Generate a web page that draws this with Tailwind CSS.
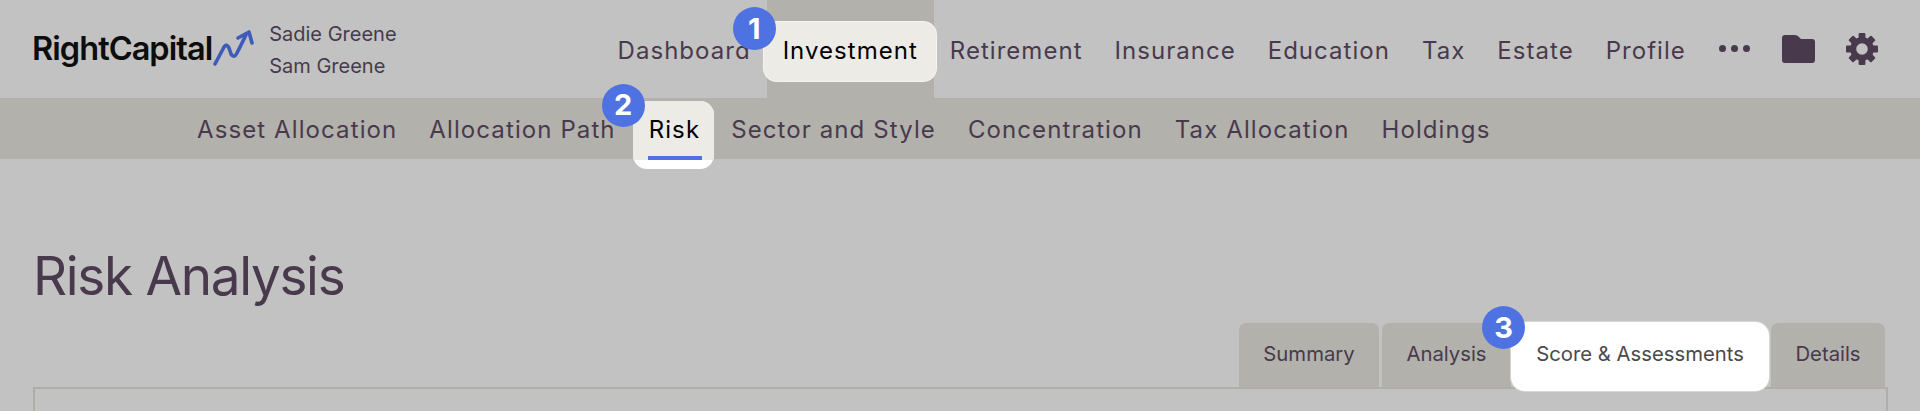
<!DOCTYPE html>
<html>
<head>
<meta charset="utf-8">
<script src="https://cdn.jsdelivr.net/npm/@tailwindcss/browser@4"></script>
</head>
<body class="m-0 h-[411px] w-[1920px] overflow-hidden bg-[#c2c2c2] font-['Inter',sans-serif] text-[#483a4c]">
  <header class="flex h-[98px] items-stretch">
    <div class="flex items-center pl-[32px]">
      <span class="text-[32.5px] font-semibold leading-none tracking-[-0.95px] text-[#0d0d0d]">RightCapital</span>
      <svg class="h-[44px] w-[42px]" viewBox="0 0 42 44" fill="none" stroke="#3d5bb8" stroke-width="3.6" stroke-linecap="round" stroke-linejoin="round">
        <path d="M3 37 L11 22 Q14 15 17 21 L19 27 Q22 32 25 26 L34 8"/>
        <path d="M26 11 L37 5 L40 16"/>
      </svg>
      <div class="ml-[15px] flex flex-col gap-[12px] pt-[2px] text-[20px] leading-[20px]">
        <span>Sadie Greene</span>
        <span>Sam Greene</span>
      </div>
    </div>
    <nav class="ml-[205px] flex items-stretch text-[24px] tracking-[1.03px]">
      <a class="flex items-center px-4 pt-[3px]">Dashboard</a>
      <a class="relative flex items-center bg-[#b3b1ac] px-4 pt-[3px] text-black">
        <span class="absolute left-[-4px] right-[-3px] top-[21px] h-[61px] rounded-[14px] border border-white/50 bg-[#edebe6]"></span>
        <span class="relative">Investment</span>
        <span class="absolute left-[-34px] top-[7px] flex h-[43px] w-[43px] items-center justify-center rounded-full bg-[#4f72e3] text-[29px] font-bold tracking-normal text-white">1</span>
      </a>
      <a class="flex items-center px-4 pt-[3px]">Retirement</a>
      <a class="flex items-center px-4 pt-[3px]">Insurance</a>
      <a class="flex items-center px-4 pt-[3px]">Education</a>
      <a class="flex items-center px-4 pt-[3px]">Tax</a>
      <a class="flex items-center px-4 pt-[3px]">Estate</a>
      <a class="flex items-center px-4 pt-[3px]">Profile</a>
      <div class="ml-[17px] flex items-center gap-[5px] pb-[1px]">
        <span class="h-[7px] w-[7px] rounded-full bg-[#483a4c]"></span>
        <span class="h-[7px] w-[7px] rounded-full bg-[#483a4c]"></span>
        <span class="h-[7px] w-[7px] rounded-full bg-[#483a4c]"></span>
      </div>
      <div class="ml-[32px] flex items-center pb-[1px]">
        <svg class="h-[28px] w-[33px]" viewBox="0 0 33 28" fill="#483a4c"><path d="M3 0 H13 Q15 0 16.5 1.5 L19 4 H30 Q33 4 33 7 V25 Q33 28 30 28 H3 Q0 28 0 25 V3 Q0 0 3 0 Z"/></svg>
      </div>
      <div class="ml-[31px] flex items-center pb-[1px]">
        <svg class="h-[32px] w-[32px]" viewBox="0 0 32 32" fill="#483a4c">
          <circle cx="16" cy="16" r="8.8" fill="none" stroke="#483a4c" stroke-width="6"/>
          <rect x="12.6" y="0" width="6.8" height="6" rx="1"/>
          <rect x="12.6" y="0" width="6.8" height="6" rx="1" transform="rotate(45 16 16)"/>
          <rect x="12.6" y="0" width="6.8" height="6" rx="1" transform="rotate(90 16 16)"/>
          <rect x="12.6" y="0" width="6.8" height="6" rx="1" transform="rotate(135 16 16)"/>
          <rect x="12.6" y="0" width="6.8" height="6" rx="1" transform="rotate(180 16 16)"/>
          <rect x="12.6" y="0" width="6.8" height="6" rx="1" transform="rotate(225 16 16)"/>
          <rect x="12.6" y="0" width="6.8" height="6" rx="1" transform="rotate(270 16 16)"/>
          <rect x="12.6" y="0" width="6.8" height="6" rx="1" transform="rotate(315 16 16)"/>
        </svg>
      </div>
    </nav>
  </header>

  <nav class="flex h-[61px] items-center gap-8 bg-[#b3b1ac] pl-[197px] pt-[2px] text-[24px] tracking-[1.1px]">
    <a>Asset Allocation</a>
    <a>Allocation Path</a>
    <a class="relative left-[1px] text-black">
      <span class="absolute left-[-16px] right-[-14px] top-[-11px] h-[68px] overflow-hidden rounded-[14px] bg-white"><span class="block h-[59px] bg-[#edebe6]"></span></span>
      <span class="absolute bottom-[-12px] left-[-1px] right-[-2px] h-[4px] bg-[#4f72e3]"></span>
      <span class="relative">Risk</span>
      <span class="absolute left-[-47px] top-[-28px] flex h-[43px] w-[43px] items-center justify-center rounded-full bg-[#4f72e3] text-[29px] font-bold tracking-normal text-white">2</span>
    </a>
    <a>Sector and Style</a>
    <a>Concentration</a>
    <a>Tax Allocation</a>
    <a>Holdings</a>
  </nav>

  <main class="px-[33px]">
    <h1 class="mt-[85px] text-[53px] font-normal leading-[64px] tracking-[-1.3px]">Risk Analysis</h1>
    <div class="mt-[15px] flex justify-end pr-[2px] text-[20.3px]">
      <a class="flex h-[64px] w-[140px] items-center justify-center rounded-t-[7px] bg-[#b3b1ac] pb-[2px]">Summary</a>
      <a class="ml-[3px] flex h-[64px] w-[129px] items-center justify-center rounded-t-[7px] bg-[#b3b1ac] pb-[2px]">Analysis</a>
      <a class="relative flex h-[64px] w-[258px] items-center justify-center pb-[2px] text-[#4a4a4a]">
        <span class="absolute inset-x-0 top-[-1px] h-[69px] rounded-[14px] bg-white ring-1 ring-[#d8d6d2]"></span>
        <span class="relative">Score &amp; Assessments</span>
        <span class="absolute left-[-29px] top-[-17px] flex h-[43px] w-[43px] items-center justify-center rounded-full bg-[#4f72e3] text-[29px] font-bold text-white">3</span>
      </a>
      <a class="ml-[2px] flex h-[64px] w-[114px] items-center justify-center rounded-t-[7px] bg-[#b3b1ac] pb-[2px]">Details</a>
    </div>
    <div class="h-[40px] w-[1855px] border-l-2 border-r-2 border-t-2 border-[#b0aea8]"></div>
  </main>
</body>
</html>
